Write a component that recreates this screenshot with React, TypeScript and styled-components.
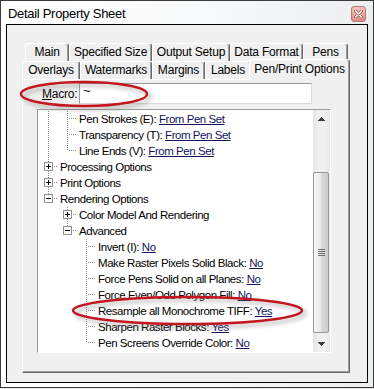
import * as React from 'react'
import styled, { createGlobalStyle } from 'styled-components'

const GlobalStyle = createGlobalStyle`
  html, body {
    margin: 0;
    padding: 0;
    background: #ffffff;
  }
  body {
    font-family: "Liberation Sans", Arial, sans-serif;
  }
`

const Screen = styled.div`
  position: relative;
  width: 374px;
  height: 389px;
  overflow: hidden;
  background: #e4e4e4;
`

const Frame = styled.div`
  width: 372px;
  height: 386px;
  border: 1px solid #3a3a3a;
  background: linear-gradient(to right, #ffffff 0%, #f8f9fa 55%, #eceef0 100%);
  display: flex;
  flex-direction: column;
`

const TitleBar = styled.div`
  height: 23px;
  display: flex;
  align-items: center;
  justify-content: space-between;
  padding: 0 7px 0 7px;
`

const Title = styled.span`
  font-size: 13px;
  letter-spacing: -0.3px;
  color: #000;
  padding-top: 2px;
`

const CloseButton = styled.div`
  width: 15px;
  height: 16px;
  box-sizing: border-box;
  border: 1px solid #b9766e;
  border-radius: 3px;
  background: linear-gradient(to bottom, #f1c4be 0%, #e7a9a1 50%, #d98b82 100%);
  display: flex;
  align-items: center;
  justify-content: center;
  margin-top: 3px;
`

const Client = styled.div`
  margin-left: 5px;
  width: 360px;
  height: 357px;
  border: 1px solid #000;
  background: #f0f0f0;
`

const TabStrip = styled.div`
  margin: 18px 0 0 15px;
  width: 328px;
`

const TabRow = styled.div<{ $inset?: number }>`
  display: flex;
  align-items: flex-end;
  height: 18px;
  padding-left: ${p => p.$inset ?? 0}px;
`

const Tab = styled.div<{ $w: number; $active?: boolean }>`
  box-sizing: border-box;
  width: ${p => p.$w}px;
  height: ${p => (p.$active ? 21 : 18)}px;
  margin: ${p => (p.$active ? '0 -2px -1px -2px' : '0')};
  position: relative;
  z-index: ${p => (p.$active ? 2 : 0)};
  border-style: solid;
  border-width: 1px 1px 0 1px;
  border-color: #ffffff #696969 transparent #ffffff;
  box-shadow: inset -1px 0 #a0a0a0;
  border-radius: 3px 3px 0 0;
  background: #f0f0f0;
  font-size: 12px;
  letter-spacing: -0.2px;
  line-height: ${p => (p.$active ? 18 : 17)}px;
  text-align: center;
  white-space: nowrap;
  color: #000;
`

const Panel = styled.div`
  position: relative;
  z-index: 1;
  box-sizing: border-box;
  width: 328px;
  height: 294px;
  border: 1px solid;
  border-color: #ffffff #696969 #696969 #ffffff;
  box-shadow: inset -1px -1px #a0a0a0;
  padding: 3px 0 0 14px;
`

const MacroRow = styled.div`
  display: flex;
  align-items: center;
  height: 21px;
  padding-left: 5px;
`

const MacroLabel = styled.label`
  width: 37px;
  font-size: 12px;
  letter-spacing: -0.2px;
  color: #000;
`

const MacroInput = styled.div`
  box-sizing: border-box;
  width: 233px;
  height: 21px;
  border: 1px solid;
  border-color: #9a9a9a #dadada #dadada #9a9a9a;
  background: #fff;
  font-size: 13px;
  padding: 0 0 0 3px;
  line-height: 14px;
  color: #000;
`

const TreeBox = styled.div`
  margin-top: 5px;
  box-sizing: border-box;
  width: 294px;
  height: 244px;
  border: 1px solid;
  border-color: #9a9a9a #ffffff #ffffff #9a9a9a;
  background: #fff;
  display: flex;
`

const TreeList = styled.div`
  flex: 1;
  padding: 1px 0 0 1px;
  overflow: hidden;
`

const TreeRow = styled.div`
  display: flex;
  align-items: center;
  height: 16px;
  white-space: nowrap;
`

const TreeText = styled.span`
  padding-left: 2px;
  font-size: 11.5px;
  letter-spacing: -0.45px;
  line-height: 16px;
  color: #000;
`

const Value = styled.span`
  color: #14145e;
  text-decoration: underline;
`

const ScrollBar = styled.div`
  width: 17px;
  display: flex;
  flex-direction: column;
  background: linear-gradient(to right, #e4e4e4 0%, #efefef 30%, #f1f1f1 70%, #e8e8e8 100%);
`

const ScrollArrow = styled.div`
  height: 17px;
  display: flex;
  align-items: center;
  justify-content: center;
`

const ScrollTrack = styled.div`
  flex: 1;
  padding-top: 45px;
`

const Thumb = styled.div`
  box-sizing: border-box;
  width: 16px;
  height: 161px;
  border: 1px solid #979797;
  border-radius: 2px;
  background: linear-gradient(to right, #f6f6f6 0%, #ebebeb 45%, #d9d9d9 55%, #cdcdcd 100%);
  display: flex;
  align-items: center;
  justify-content: center;
`

const Overlay = styled.svg`
  position: absolute;
  left: 0;
  top: 0;
  z-index: 10;
  pointer-events: none;
`

type Row = {
  level: number
  label: string
  value?: string
  expander?: '+' | '-'
  guides: boolean[]
  last?: boolean
}

const rows: Row[] = [
  { level: 1, label: 'Pen Strokes (E):', value: 'From Pen Set', guides: [true] },
  { level: 1, label: 'Transparency (T):', value: 'From Pen Set', guides: [true] },
  { level: 1, label: 'Line Ends (V):', value: 'From Pen Set', guides: [true], last: true },
  { level: 0, label: 'Processing Options', expander: '+', guides: [] },
  { level: 0, label: 'Print Options', expander: '+', guides: [] },
  { level: 0, label: 'Rendering Options', expander: '-', guides: [], last: true },
  { level: 1, label: 'Color Model And Rendering', expander: '+', guides: [false] },
  { level: 1, label: 'Advanced', expander: '-', guides: [false], last: true },
  { level: 2, label: 'Invert (I):', value: 'No', guides: [false, false] },
  { level: 2, label: 'Make Raster Pixels Solid Black:', value: 'No', guides: [false, false] },
  { level: 2, label: 'Force Pens Solid on all Planes:', value: 'No', guides: [false, false] },
  { level: 2, label: 'Force Even/Odd Polygon Fill:', value: 'No', guides: [false, false] },
  { level: 2, label: 'Resample all Monochrome TIFF:', value: 'Yes', guides: [false, false] },
  { level: 2, label: 'Sharpen Raster Blocks:', value: 'Yes', guides: [false, false] },
  { level: 2, label: 'Pen Screens Override Color:', value: 'No', guides: [false, false], last: true },
]

const DOT = '#8f8f8f'

function Guide({ on }: { on: boolean }) {
  return (
    <svg width="19" height="16" shapeRendering="crispEdges">
      {on && <line x1="9.5" y1="0" x2="9.5" y2="16" stroke={DOT} strokeDasharray="1 1" />}
    </svg>
  )
}

function Connector({ last, expander }: { last?: boolean; expander?: '+' | '-' }) {
  return (
    <svg width="19" height="16" shapeRendering="crispEdges">
      <line x1="9.5" y1="0" x2="9.5" y2={last ? 8 : 16} stroke={DOT} strokeDasharray="1 1" />
      <line x1="11" y1="7.5" x2="19" y2="7.5" stroke={DOT} strokeDasharray="1 1" />
      {expander && (
        <>
          <rect x="5.5" y="3.5" width="8" height="8" fill="#fff" stroke="#919191" />
          <line x1="7" y1="7.5" x2="12" y2="7.5" stroke="#000" />
          {expander === '+' && <line x1="9.5" y1="5" x2="9.5" y2="10" stroke="#000" />}
        </>
      )}
    </svg>
  )
}

function CloseGlyph() {
  return (
    <svg width="9" height="8" viewBox="0 0 9 8">
      <path d="M1.5 1 L7.5 7 M7.5 1 L1.5 7" stroke="#9a5a54" strokeWidth="3" strokeLinecap="round" />
      <path d="M1.5 1 L7.5 7 M7.5 1 L1.5 7" stroke="#ffffff" strokeWidth="1.4" strokeLinecap="round" />
    </svg>
  )
}

function Arrow({ up }: { up?: boolean }) {
  return (
    <svg width="7" height="4" viewBox="0 0 7 4" shapeRendering="crispEdges">
      <polygon points={up ? '3.5,0 7,4 0,4' : '0,0 7,0 3.5,4'} fill="#3c3c3c" />
    </svg>
  )
}

function Grip() {
  return (
    <svg width="7" height="8" shapeRendering="crispEdges">
      {[0.5, 2.5, 4.5, 6.5].map(y => (
        <line key={y} x1="0" y1={y} x2="7" y2={y} stroke="#6f6f6f" />
      ))}
    </svg>
  )
}

function Highlights() {
  return (
    <Overlay width="374" height="389" viewBox="0 0 374 389">
      <defs>
        <filter id="soft" x="-20%" y="-80%" width="140%" height="260%">
          <feGaussianBlur stdDeviation="2" />
        </filter>
      </defs>
      <g transform="translate(3 3)" filter="url(#soft)" opacity="0.45">
        <ellipse cx="84" cy="94" rx="63" ry="12" fill="none" stroke="#707070" strokeWidth="3" />
        <ellipse cx="187.5" cy="310.5" rx="114.5" ry="13.5" fill="none" stroke="#707070" strokeWidth="3" />
      </g>
      <ellipse cx="84" cy="94" rx="63" ry="12" fill="none" stroke="#c3161f" strokeWidth="2.4" />
      <ellipse cx="187.5" cy="310.5" rx="114.5" ry="13.5" fill="none" stroke="#c3161f" strokeWidth="2.4" />
    </Overlay>
  )
}

export default function App() {
  return (
    <Screen>
      <GlobalStyle />
      <Frame>
        <TitleBar>
          <Title>Detail Property Sheet</Title>
          <CloseButton>
            <CloseGlyph />
          </CloseButton>
        </TitleBar>
        <Client>
          <TabStrip>
            <TabRow $inset={3}>
              <Tab $w={44}>Main</Tab>
              <Tab $w={83}>Specified Size</Tab>
              <Tab $w={78}>Output Setup</Tab>
              <Tab $w={73}>Data Format</Tab>
              <Tab $w={45}>Pens</Tab>
            </TabRow>
            <TabRow>
              <Tab $w={58}>Overlays</Tab>
              <Tab $w={72}>Watermarks</Tab>
              <Tab $w={53}>Margins</Tab>
              <Tab $w={46}>Labels</Tab>
              <Tab $w={101} $active>
                Pen/Print Options
              </Tab>
            </TabRow>
            <Panel>
              <MacroRow>
                <MacroLabel>
                  <u>M</u>acro:
                </MacroLabel>
                <MacroInput>~</MacroInput>
              </MacroRow>
              <TreeBox>
                <TreeList>
                  {rows.map(r => (
                    <TreeRow key={r.label}>
                      {r.guides.map((g, i) => (
                        <Guide key={i} on={g} />
                      ))}
                      <Connector last={r.last} expander={r.expander} />
                      <TreeText>
                        {r.label}
                        {r.value && (
                          <>
                            {' '}
                            <Value>{r.value}</Value>
                          </>
                        )}
                      </TreeText>
                    </TreeRow>
                  ))}
                </TreeList>
                <ScrollBar>
                  <ScrollArrow>
                    <Arrow up />
                  </ScrollArrow>
                  <ScrollTrack>
                    <Thumb>
                      <Grip />
                    </Thumb>
                  </ScrollTrack>
                  <ScrollArrow>
                    <Arrow />
                  </ScrollArrow>
                </ScrollBar>
              </TreeBox>
            </Panel>
          </TabStrip>
        </Client>
      </Frame>
      <Highlights />
    </Screen>
  )
}
